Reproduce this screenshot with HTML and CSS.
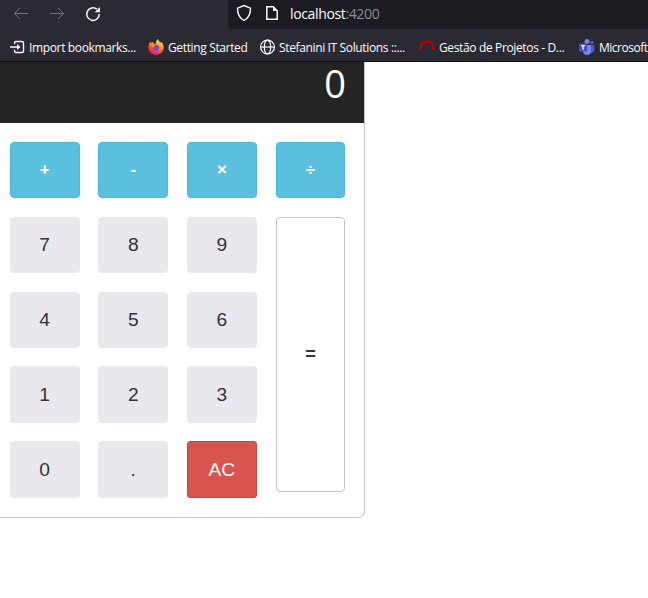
FILE: index.html
```html
<!DOCTYPE html>
<html lang="en">
<head>
<meta charset="utf-8">
<title>Calculator</title>
<link rel="stylesheet" href="styles.css">
</head>
<body>
<header class="browser">
  <div class="toolbar">
    <nav class="nav">
      <svg class="dim" width="16" height="16" viewBox="0 0 16 16"><path d="M15 7.500H1.500M7 2L1.500 7.500 7 13"/></svg>
      <svg class="dim" width="16" height="16" viewBox="0 0 16 16"><path d="M1 7.500h13.500M9 2l5.500 5.500L9 13"/></svg>
      <svg width="16" height="16" viewBox="0 0 16 16"><path stroke-width="1.500" d="M14.300 8A6.300 6.300 0 1 1 12 3.200"/><path class="solid" d="M15 1v5.300H9.700z"/></svg>
    </nav>
    <div class="address">
      <svg class="shield" width="16" height="18" viewBox="0 0 16 18"><path stroke-width="1.400" d="M8 1.500l6.500 2.700c0 5.500-1.600 9.800-6.500 12.300C3.100 14 1.500 9.700 1.500 4.200z"/></svg>
      <svg class="page-icon" width="12" height="16" viewBox="0 0 12 16"><path stroke-width="1.500" d="M.8 1.700h6.400l4 4v8.600H.8z"/><path class="solid" d="M7 1v5h5z"/></svg>
      <span class="url">localhost<span class="port">:4200</span></span>
    </div>
  </div>
  <div class="bookmarks">
    <a class="bookmark import"><svg width="16" height="16" viewBox="0 0 16 16"><path stroke-width="1.400" d="M4.500 5.200V4a1.500 1.500 0 0 1 1.500-1.500h6A1.500 1.500 0 0 1 13.500 4v8a1.500 1.500 0 0 1-1.500 1.500H6A1.500 1.500 0 0 1 4.500 12v-1.200M0 8h8"/><path class="solid" d="M7 5l3.500 3L7 11z"/></svg><span>Import bookmarks...</span></a>
    <a class="bookmark started"><svg width="16" height="16" viewBox="0 0 16 16">
      <defs><linearGradient id="flame" x1=".8" y1="0" x2=".3" y2="1"><stop offset="0" stop-color="#fff44f"/><stop offset=".4" stop-color="#ff9a20"/><stop offset=".75" stop-color="#ff3647"/><stop offset="1" stop-color="#e31587"/></linearGradient></defs>
      <path fill="url(#flame)" stroke="none" d="M10 0c.3 2 1.800 2.500 3 4 .6-.2.600-1 .6-1C15 4.500 15.800 6.500 15.600 9c-.4 4-3.600 6.800-7.600 6.800S.4 12.500.4 8.500c0-2.500.800-4.500 2-6 .2 1 .6 1.500.6 1.500l2-1 1 2 2-.5C7.700 2.500 8.800 1 10 0z"/>
      <path fill="#7b45e8" stroke="none" d="M5 6.500c2-1 5-1 6 1 .8 2.500-1 4-3 4S4.300 10 5 8.500l2-.4z"/><path fill="#ff9a20" stroke="none" d="M3 5l3 .5 1 1.500-2.500 1.500z"/></svg><span>Getting Started</span></a>
    <a class="bookmark stefanini"><svg width="16" height="16" viewBox="0 0 16 16"><g stroke-width="1.200"><circle cx="8.500" cy="8" r="6.900"/><ellipse cx="8.500" cy="8" rx="3.200" ry="6.900"/><path d="M1.500 8h14"/></g></svg><span>Stefanini IT Solutions ::...</span></a>
    <a class="bookmark projects"><svg width="16" height="16" viewBox="0 0 16 16"><path stroke="#c40000" stroke-width="3" stroke-dasharray="2.500 1" d="M1.700 10.500C.5 0 15.500 0 14.300 10.500"/></svg><span>Gestão de Projetos - D...</span></a>
    <a class="bookmark teams"><svg width="16" height="16" viewBox="0 0 16 16"><g stroke="none"><circle cx="8" cy="2.500" r="2.500" fill="#7b83eb"/><circle cx="13" cy="3.500" r="1.700" fill="#5059c9"/><path fill="#5059c9" d="M10 6h5.500v5a3 3 0 0 1-4 2.500z"/><path fill="#7b83eb" d="M4 6h8v6a4 4 0 0 1-8 0z"/><path fill="#4650b8" d="M0 4.500h8v8H0z"/></g><path stroke="#fff" stroke-width="1.300" d="M2 6.700h4M4 6.700v4"/></svg><span>Microsoft</span></a>
  </div>
</header>
<main class="calculator">
  <output class="display">0</output>
  <div class="keys">
    <button class="key operator">+</button>
    <button class="key operator">-</button>
    <button class="key operator">×</button>
    <button class="key operator">÷</button>
    <button class="key">7</button>
    <button class="key">8</button>
    <button class="key">9</button>
    <button class="key equals">=</button>
    <button class="key">4</button>
    <button class="key">5</button>
    <button class="key">6</button>
    <button class="key">1</button>
    <button class="key">2</button>
    <button class="key">3</button>
    <button class="key">0</button>
    <button class="key">.</button>
    <button class="key clear">AC</button>
  </div>
</main>
</body>
</html>
```
FILE: styles.css
```css
* { box-sizing: border-box; }
body {
  margin: 0;
  height: 598px;
  overflow: hidden;
  background: #fff;
  font-family: "Liberation Sans", Arial, sans-serif;
}
.browser {
  height: 62px;
  background: #2b2a33;
  border-bottom: 1px solid #0c0c0d;
  color: #fbfbfe;
  font-family: "Open Sans", "Noto Sans", sans-serif;
  letter-spacing: -0.36px;
  overflow: hidden;
}
svg { display: block; flex: none; fill: none; stroke: #fbfbfe; overflow: visible; }
.solid { fill: #fbfbfe; stroke: none; }
.dim { stroke: #77767e; }
.toolbar { display: flex; height: 29px; }
.nav {
  display: flex;
  gap: 20px;
  width: 228px;
  padding: 6px 0 0 13px;
}
.address {
  display: flex;
  flex: 1;
  align-items: center;
  height: 29px;
  padding: 0 0 3px 8px;
  background: #1c1b22;
  border-radius: 0 0 0 4px;
}
.page-icon { margin-left: 14px; }
.url { margin: 2px 0 0 12px; font-size: 14px; line-height: 20px; white-space: nowrap; }
.port { color: #8f8e95; }
.bookmarks { display: flex; height: 32px; padding: 2px 0 0 10px; }
.bookmark {
  display: flex;
  flex: none;
  align-items: center;
  gap: 3px;
  height: 32px;
  font-size: 12px;
  white-space: nowrap;
}
.import { width: 138px; }
.started { width: 111px; gap: 4px; }
.stefanini { width: 160px; gap: 4px; }
.projects { width: 160px; gap: 4px; }
.teams { gap: 4px; letter-spacing: -0.5px; }
.calculator {
  width: 365px;
  height: 456px;
  border: 1px solid #c4c4c4;
  border-width: 0 1px 1px 0;
  border-radius: 0 0 7px 0;
}
.display {
  display: block;
  height: 61px;
  padding-right: 18px;
  background: #252525;
  color: #fff;
  font: 38px/43px "Open Sans", "Noto Sans", sans-serif;
  text-align: right;
}
.keys {
  display: grid;
  grid-template-columns: repeat(4, 69.8px);
  grid-auto-rows: 56.4px;
  gap: 18.4px 18.8px;
  padding: 19px 0 0 9.8px;
}
.key {
  padding: 0;
  border: 1px solid #e8e8ed;
  border-radius: 4px;
  background: #e8e8ed;
  color: #333;
  font: 19.2px "Liberation Sans", Arial, sans-serif;
}
.operator {
  border-color: #46b8da;
  background: #5bc0de;
  color: #fff;
  font-size: 17px;
  font-weight: bold;
}
.equals {
  grid-column: 4;
  grid-row: 2 / span 4;
  height: 274.8px;
  border-color: #c4c4c4;
  background: #fff;
  font-size: 18px;
  font-weight: bold;
}
.clear { border-color: #d43f3a; background: #d9534f; color: #fff; border-radius: 3px; }
.key:nth-child(n + 15) { padding-top: 1px; }
```
